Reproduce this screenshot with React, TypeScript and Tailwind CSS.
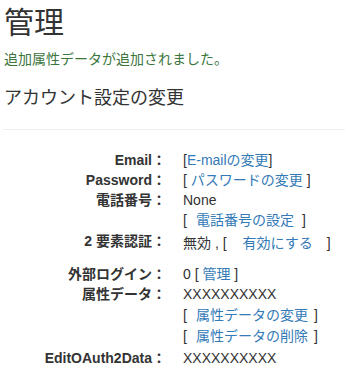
import React from 'react';

const font = { fontFamily: '"Liberation Sans", "Noto Sans CJK JP", sans-serif' };

function Row({ label, children, className = 'h-[20px]' }: { label: string; children: React.ReactNode; className?: string }) {
  return (
    <div className={`flex ${className}`}>
      <dt className="w-[166px] shrink-0 text-right font-bold leading-[20px]">{label}</dt>
      <dd className="pl-[17px] leading-[20px]">{children}</dd>
    </div>
  );
}

function Link({ children }: { children: React.ReactNode }) {
  return <a className="text-[#337ab7]">{children}</a>;
}

export default function App() {
  return (
    <div className="min-h-screen bg-white text-[14px] text-[#333]" style={font}>
      <div className="px-[4px]">
        <h2 className="mt-[6px] text-[30px] leading-[33px] font-normal">管理</h2>
        <p className="mt-[10px] leading-[20px] text-[#3c763d]">追加属性データが追加されました。</p>
        <h4 className="mt-[19px] text-[18px] leading-[20px] font-normal">アカウント設定の変更</h4>
      </div>
      <hr className="mt-[21px] ml-[3px] mr-[1px] border-t border-[#eee]" />
      <dl className="mt-[20px]">
        <Row label="Email：">
          [<Link>E-mailの変更</Link>]
        </Row>
        <Row label="Password：">
          [ <Link>パスワードの変更</Link> ]
        </Row>
        <Row label="電話番号：">None</Row>
        <Row label="" className="h-[21px]">
          <span className="leading-[21px]">
            [<span className="ml-[9px] mr-[8px]"><Link>電話番号の設定</Link></span>]
          </span>
        </Row>
        <Row label="2 要素認証：" className="h-[33px]">
          <span className="mt-[2px] block">
            無効 , [<span className="ml-[16px] mr-[14px]"><Link>有効にする</Link></span>]
          </span>
        </Row>
        <Row label="外部ログイン：">
          0 [ <Link>管理</Link> ]
        </Row>
        <Row label="属性データ：" className="h-[21px]">XXXXXXXXXX</Row>
        <Row label="" className="h-[21px]">
          [<span className="ml-[9px] mr-[6px]"><Link>属性データの変更</Link></span>]
        </Row>
        <Row label="" className="h-[22px]">
          [<span className="ml-[9px] mr-[6px]"><Link>属性データの削除</Link></span>]
        </Row>
        <Row label="EditOAuth2Data：">XXXXXXXXXX</Row>
      </dl>
    </div>
  );
}
